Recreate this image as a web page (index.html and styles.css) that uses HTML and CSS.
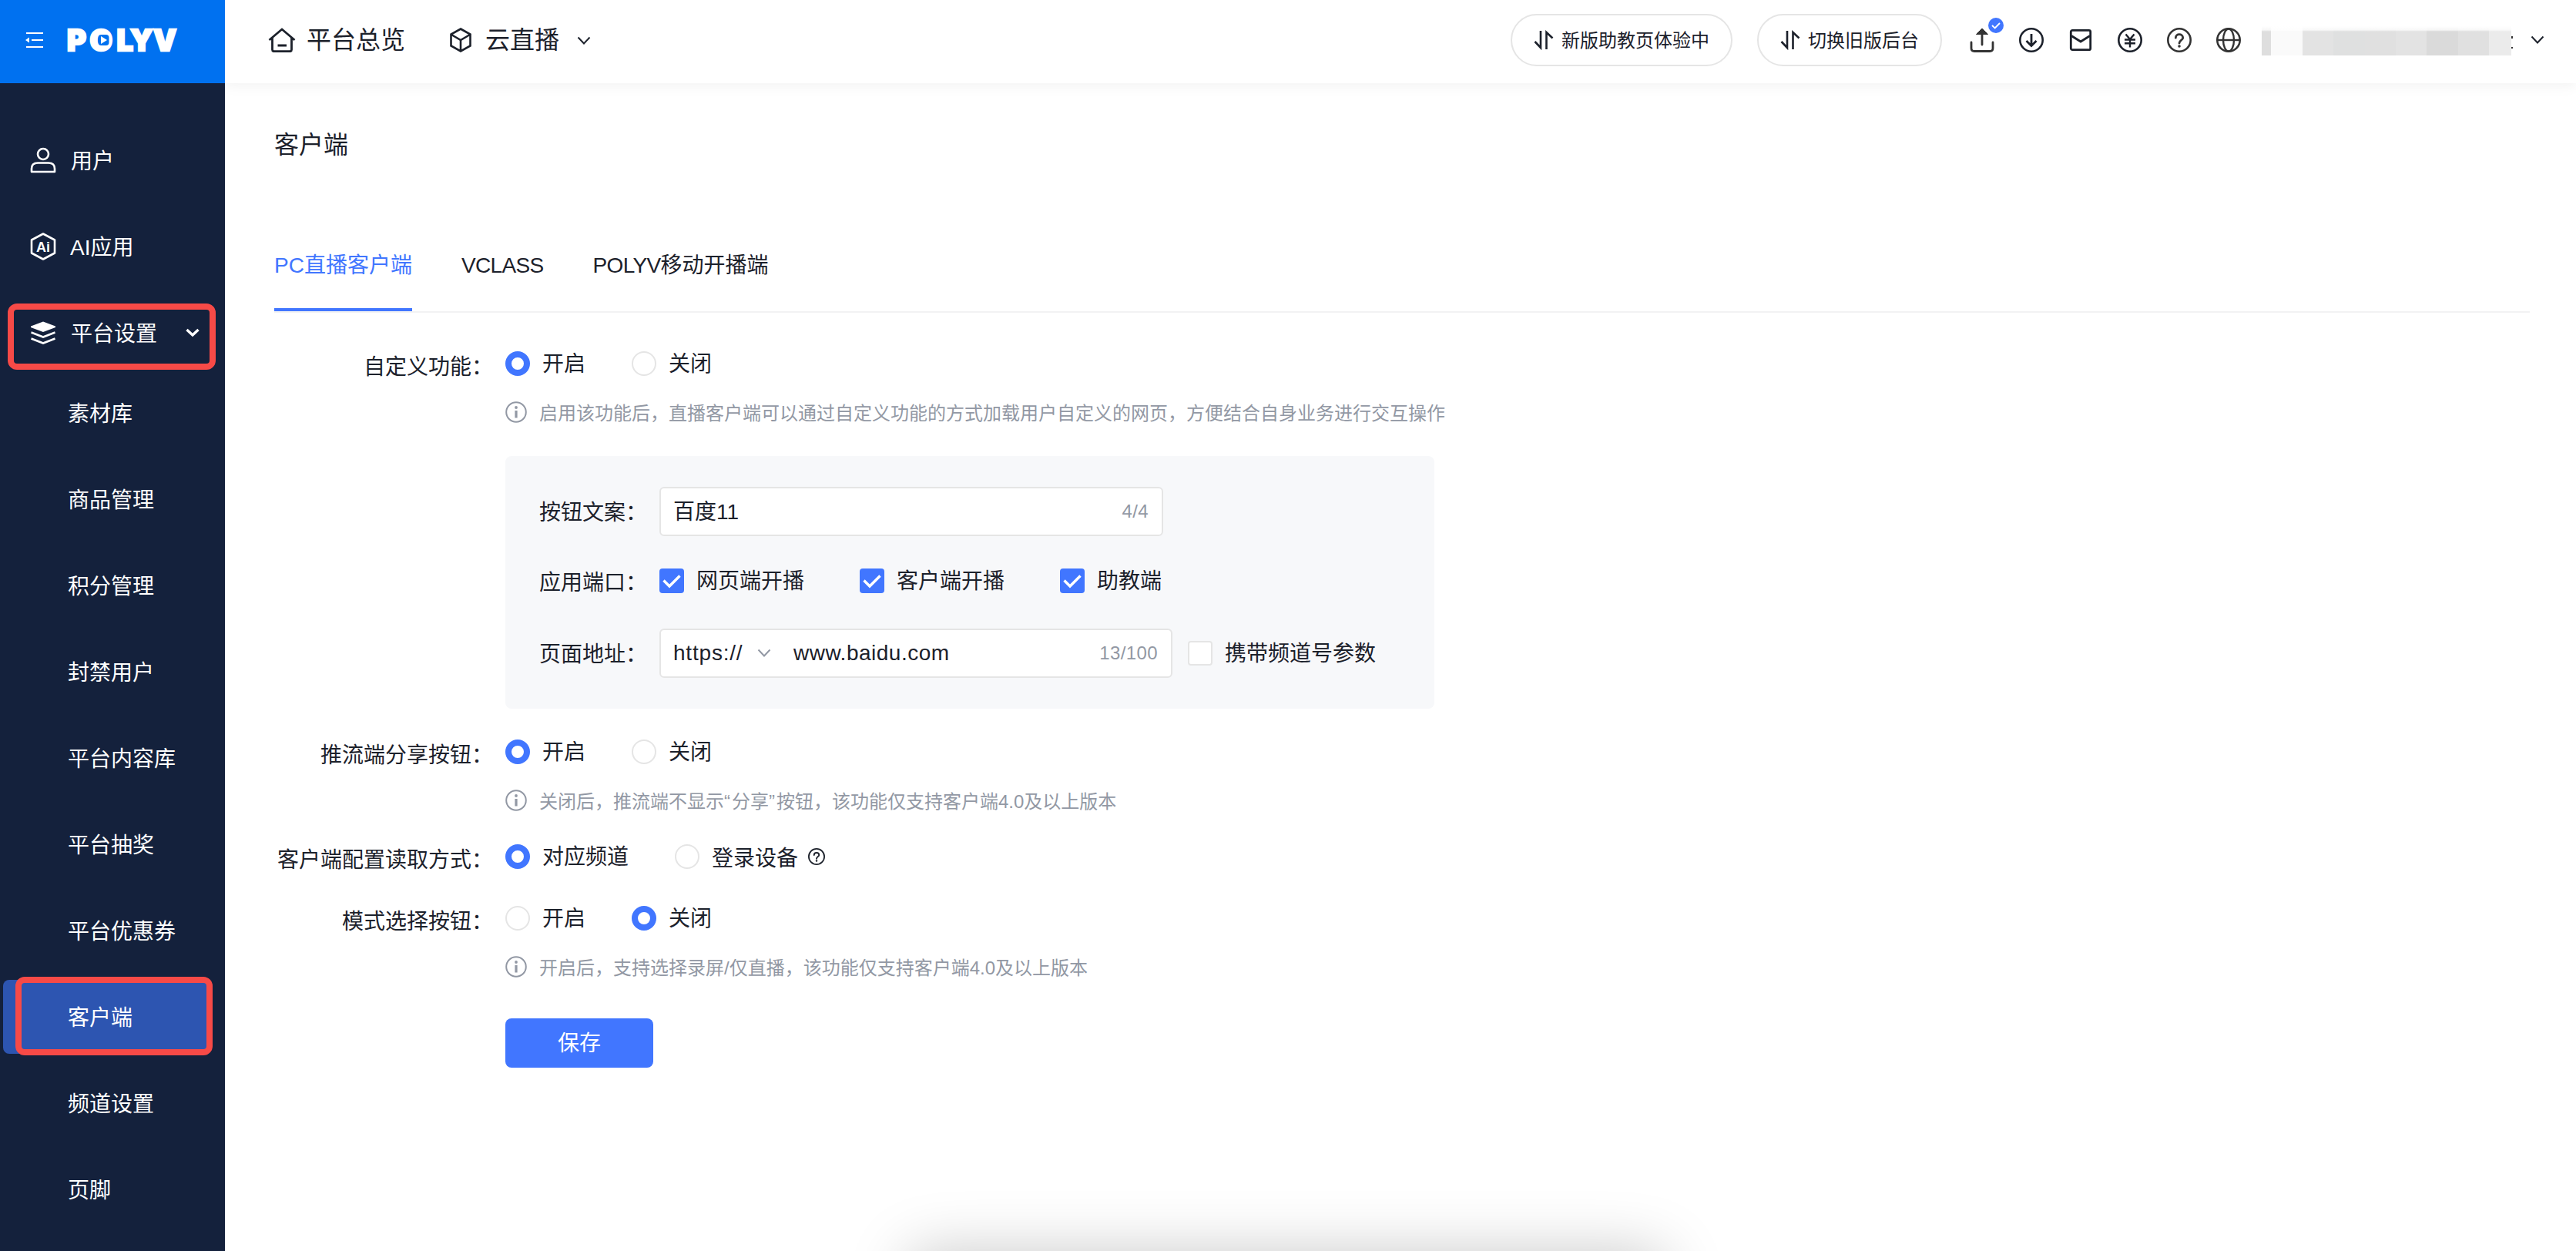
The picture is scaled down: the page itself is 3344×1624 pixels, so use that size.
FILE: index.html
```html
<!DOCTYPE html>
<html lang="zh-CN">
<head>
<meta charset="utf-8">
<title>客户端 - POLYV</title>
<link rel="stylesheet" href="styles.css">
</head>
<body>
<svg class="defs" width="0" height="0">
  <symbol id="info" viewBox="0 0 28 28"><circle cx="14" cy="14" r="12.8" fill="none" stroke="currentColor" stroke-width="2"/><circle cx="14" cy="8" r="1.9" fill="currentColor"/><path d="M14 12v9.500" stroke="currentColor" stroke-width="3.200"/></symbol>
  <symbol id="chevron" viewBox="0 0 18 12"><path d="M1.500 1.500L9 9.500L16.500 1.500" fill="none" stroke="currentColor" stroke-width="2"/></symbol>
  <symbol id="swap" viewBox="0 0 26 26"><path d="M9 1v22L1.500 15M16.500 25V3L24.500 10.500" fill="none" stroke="currentColor" stroke-width="2.600"/></symbol>
  <symbol id="check" viewBox="0 0 32 32"><path d="M5.500 15.500L13 23L26.500 9.500" fill="none" stroke="#fff" stroke-width="3.400"/></symbol>
  <symbol id="question" viewBox="0 0 32 32"><circle cx="16" cy="16" r="14.700" fill="none" stroke="currentColor" stroke-width="2.600"/><path d="M11.300 13.200C11.300 7.200 20.700 7.200 20.700 13.200C20.700 16.200 16 16 16 20" fill="none" stroke="currentColor" stroke-width="2.800" stroke-linecap="round"/><circle cx="16" cy="24" r="1.800" fill="currentColor"/></symbol>
</svg>
<div class="app">
  <aside class="sidebar">
    <div class="brand">
      <svg class="fold" viewBox="0 0 24 22" width="24" height="22"><path d="M1 2H23M8 11H23M1 20H23" stroke="#fff" stroke-width="2.200"/><path d="M0 11L5 7.500V14.500Z" fill="#fff"/></svg>
      <svg class="logo" viewBox="0 0 150 32" width="150" height="32"><text x="-1 28.5 63.500 81 111" y="29.500">POLYV</text><rect x="39.500" y="9" width="14" height="14" rx="4" fill="#0071f0"/><path d="M43 11L51 16L43 21Z" fill="#fff"/></svg>
    </div>
    <nav class="menu">
      <a class="item"><svg viewBox="0 0 36 36" width="36" height="36"><circle cx="18" cy="10" r="7" fill="none" stroke="#fff" stroke-width="2.600"/><path d="M3 33V29C3 24 6 21.500 11 21.500H25C30 21.500 33 24 33 29V33Z" fill="none" stroke="#fff" stroke-width="2.600" stroke-linejoin="round"/></svg><span>用户</span></a>
      <a class="item"><svg viewBox="0 0 36 36" width="36" height="36"><path d="M18 1.500L33 9.500V26.500L18 34.500L3 26.500V9.500Z" fill="none" stroke="#fff" stroke-width="2.600" stroke-linejoin="round"/><text class="ai" x="18" y="25" text-anchor="middle">Ai</text></svg><span class="tight">AI应用</span></a>
      <a class="item open"><svg viewBox="0 0 36 36" width="36" height="36"><path d="M18 3.500L34 9.500V11L18 17L2 11V9.500Z" fill="#fff"/><path d="M2.500 17.500L18 23.500L33.500 17.500M2.500 25.500L18 31.500L33.500 25.500" fill="none" stroke="#fff" stroke-width="2.600"/></svg><span>平台设置</span><svg class="arrow" viewBox="0 0 18 12" width="18" height="12"><path d="M1.500 2L9 9L16.500 2" fill="none" stroke="#fff" stroke-width="3.400"/></svg></a>
      <div class="submenu">
        <a class="sub">素材库</a>
        <a class="sub">商品管理</a>
        <a class="sub">积分管理</a>
        <a class="sub">封禁用户</a>
        <a class="sub">平台内容库</a>
        <a class="sub">平台抽奖</a>
        <a class="sub">平台优惠券</a>
        <a class="sub active">客户端</a>
        <a class="sub">频道设置</a>
        <a class="sub">页脚</a>
      </div>
    </nav>
  </aside>
  <div class="body">
    <header class="topbar">
      <a class="crumb"><svg viewBox="0 0 36 32" width="36" height="32"><path d="M1.500 16L18 2L34.500 16M5.500 13V28.500Q5.500 30.700 7.700 30.700H28.300Q30.500 30.700 30.500 28.500V13M12.500 23H24" fill="none" stroke="currentColor" stroke-width="2.800"/></svg><span>平台总览</span></a>
      <a class="crumb product"><svg viewBox="0 0 28 32" width="28" height="32"><path d="M14 1.500L26.500 8.500V23.500L14 30.500L1.500 23.500V8.500ZM2 9L14 16L26 9M14 16V30" fill="none" stroke="currentColor" stroke-width="2.600"/></svg><span>云直播</span><svg class="caret" width="18" height="12"><use href="#chevron"/></svg></a>
      <div class="tools">
        <a class="pill"><svg width="26" height="26"><use href="#swap"/></svg><span>新版助教页体验中</span></a>
        <a class="pill"><svg width="26" height="26"><use href="#swap"/></svg><span>切换旧版后台</span></a>
        <div class="icons">
          <div class="upload"><svg viewBox="0 0 32 32" width="32" height="32"><path d="M2 19V26.500Q2 30.500 6 30.500H26Q30 30.500 30 26.500V19M16 22V6" fill="none" stroke="#333" stroke-width="2.800" stroke-linecap="round"/><path d="M16 1L23.500 8.500H8.500Z" fill="#333" stroke="#333" stroke-linejoin="round"/></svg><svg class="done" viewBox="0 0 20 20" width="20" height="20"><circle cx="10" cy="10" r="10" fill="#4176ff"/><path d="M5 10L8.700 13.500L15 7" fill="none" stroke="#fff" stroke-width="1.800"/></svg></div>
          <svg viewBox="0 0 32 32" width="32" height="32"><circle cx="16" cy="16" r="14.700" fill="none" stroke="currentColor" stroke-width="2.600"/><path d="M16 8V23M9.500 17L16 23.500L22.500 17" fill="none" stroke="currentColor" stroke-width="2.800"/></svg>
          <svg viewBox="0 0 32 32" width="32" height="32"><rect x="3.300" y="3.300" width="25.400" height="25.400" rx="2" fill="none" stroke="currentColor" stroke-width="2.800"/><path d="M4 10.500L16 18L28 10.500" fill="none" stroke="currentColor" stroke-width="2.800"/></svg>
          <svg viewBox="0 0 32 32" width="32" height="32"><circle cx="16" cy="16" r="14.700" fill="none" stroke="currentColor" stroke-width="2.600"/><path d="M10.500 8.500L16 15L21.500 8.500M9 15.500H23M9 20.300H23M16 15V25.500" fill="none" stroke="currentColor" stroke-width="2.400"/></svg>
          <svg class="soft" width="32" height="32"><use href="#question"/></svg>
          <svg class="soft" viewBox="0 0 32 32" width="32" height="32"><circle cx="16" cy="16" r="14.700" fill="none" stroke="currentColor" stroke-width="2.600"/><ellipse cx="16" cy="16" rx="7" ry="14.500" fill="none" stroke="currentColor" stroke-width="2.400"/><path d="M1.500 16H30.500" stroke="currentColor" stroke-width="2.400"/></svg>
        </div>
        <div class="account"><div class="mask"></div><i class="tail"></i><svg width="18" height="12"><use href="#chevron"/></svg></div>
      </div>
    </header>
    <main class="content">
      <h1>客户端</h1>
      <div class="tabs"><a class="tab current">PC直播客户端</a><a class="tab"><span class="latin">VCLASS</span></a><a class="tab"><span class="latin">POLYV</span>移动开播端</a></div>
      <section class="form">
        <div class="row">
          <div class="label">自定义功能：</div>
          <div class="field">
            <div class="options"><label class="option"><i class="radio on"></i><span>开启</span></label><label class="option"><i class="radio"></i><span>关闭</span></label></div>
            <div class="hint"><svg width="28" height="28"><use href="#info"/></svg><span>启用该功能后，直播客户端可以通过自定义功能的方式加载用户自定义的网页，方便结合自身业务进行交互操作</span></div>
            <div class="panel">
              <div class="line"><div class="name">按钮文案：</div><div class="input text"><span>百度11</span><em>4/4</em></div></div>
              <div class="line ports"><div class="name">应用端口：</div><div class="checks"><label class="option"><svg class="box on" width="32" height="32"><use href="#check"/></svg><span>网页端开播</span></label><label class="option"><svg class="box on" width="32" height="32"><use href="#check"/></svg><span>客户端开播</span></label><label class="option"><svg class="box on" width="32" height="32"><use href="#check"/></svg><span>助教端</span></label></div></div>
              <div class="line"><div class="name">页面地址：</div><div class="input url"><span class="scheme">https://</span><svg width="18" height="12"><use href="#chevron"/></svg><span class="host">www.baidu.com</span><em>13/100</em></div><label class="option carry"><i class="box"></i><span>携带频道号参数</span></label></div>
            </div>
          </div>
        </div>
        <div class="row share">
          <div class="label">推流端分享按钮：</div>
          <div class="field">
            <div class="options"><label class="option"><i class="radio on"></i><span>开启</span></label><label class="option"><i class="radio"></i><span>关闭</span></label></div>
            <div class="hint"><svg width="28" height="28"><use href="#info"/></svg><span>关闭后，推流端不显示<b>“</b>分享<b>”</b>按钮，该功能仅支持客户端4.0及以上版本</span></div>
          </div>
        </div>
        <div class="row config">
          <div class="label">客户端配置读取方式：</div>
          <div class="field">
            <div class="options"><label class="option"><i class="radio on"></i><span>对应频道</span></label><label class="option device"><i class="radio"></i><span>登录设备</span><svg width="22" height="22"><use href="#question"/></svg></label></div>
          </div>
        </div>
        <div class="row mode">
          <div class="label">模式选择按钮：</div>
          <div class="field">
            <div class="options"><label class="option"><i class="radio"></i><span>开启</span></label><label class="option"><i class="radio on"></i><span>关闭</span></label></div>
            <div class="hint"><svg width="28" height="28"><use href="#info"/></svg><span>开启后，支持选择录屏/仅直播，该功能仅支持客户端4.0及以上版本</span></div>
            <button class="save">保存</button>
          </div>
        </div>
      </section>
    </main>
  </div>
</div>
<div class="frame frame-parent"></div>
<div class="frame frame-child"></div>
<div class="floating"></div>
</body>
</html>
```
FILE: styles.css
```css
* { box-sizing: border-box; }
html, body { margin: 0; height: 100%; overflow: hidden; }
body {
  position: relative;
  background: #fff;
  color: #1c212b;
  font: 28px/32px "Liberation Sans", "Noto Sans CJK SC", sans-serif;
  white-space: nowrap;
}
svg { display: block; flex: none; }
i, em { font-style: normal; }
.defs { position: absolute; }
.app { display: flex; height: 1624px; overflow: hidden; }

/* sidebar */
.sidebar { position: relative; z-index: 2; flex: none; width: 292px; background: #14213c; color: #fff; }
.brand { display: flex; align-items: flex-start; gap: 31px; height: 108px; padding: 36px 0 0 33px; background: #0071f0; }
.fold { margin-top: 5px; }
.logo { overflow: visible; }
.logo text { font: 900 38px Inter, sans-serif; fill: #fff; stroke: #fff; stroke-width: 2.4px; }
.menu { padding-top: 44px; }
.item { display: flex; align-items: center; height: 112px; padding-left: 38px; }
.item span { margin-left: 18px; padding-top: 3px; }
.item .tight { margin-left: 17px; }
.item .arrow { margin-left: 37px; }
.ai { font: 700 18px "Liberation Sans", sans-serif; fill: #fff; }
.submenu { display: flex; flex-direction: column; gap: 16px; }
.sub { height: 96px; margin: 0 20px 0 4px; padding: 2px 0 0 84px; line-height: 96px; border-radius: 8px; }
.sub.active { background: #2d55b1; }

/* top bar */
.body { flex: 1; min-width: 0; }
.topbar { display: flex; align-items: center; height: 108px; padding: 0 41px 4px 56px; background: #fff; box-shadow: 0 4px 16px rgba(0, 0, 0, 0.05); }
.crumb { display: flex; align-items: center; font-size: 32px; }
.crumb span { margin-left: 14px; }
.crumb.product { margin-left: 58px; }
.crumb.product span { margin-left: 18px; }
.caret { margin-left: 23px; margin-top: 2px; }
.tools { display: flex; align-items: center; margin-left: auto; }
.pill { display: flex; align-items: center; height: 68px; margin-right: 32px; padding: 0 28px; border: 2px solid #e5e5e5; border-radius: 34px; font-size: 24px; }
.pill span { margin-left: 10px; padding-top: 2px; }
.icons { display: flex; gap: 32px; margin-left: 4px; }
.icons .soft { color: #333; }
.upload { position: relative; }
.done { position: absolute; left: 24px; top: -13px; }
.account { display: flex; align-items: center; margin-left: 27px; }
.mask {
  width: 324px; height: 38px; margin-top: 2px;
  background:
    linear-gradient(#fff, rgba(255, 255, 255, 0.75) 5px, transparent 7px),
    linear-gradient(90deg, #dedede 12px, #fafafa 12px 53px, #e3e3e3 53px 93px, #dfe0e0 93px 134px, #e0e0e0 134px 174px, #e3e3e3 174px 214px, #dadada 214px 255px, #e0e0e0 255px 295px, #ebebeb 295px);
}
.tail { width: 2px; height: 16px; margin: 6px 23px 0 0; border-top: 3px solid #333; border-bottom: 2px solid #333; }

/* page */
.content { padding: 63px 60px 0 64px; }
h1 { margin: 0; font-size: 32px; line-height: 34px; font-weight: 400; }
.tabs { display: flex; gap: 64px; height: 108px; margin-top: 93px; border-bottom: 2px solid #f2f2f3; }
.tab { height: 106px; padding-top: 31px; }
.tab.current { border-bottom: 4px solid #4176ff; color: #4176ff; }
.latin { letter-spacing: -0.65px; }

/* form */
.form { padding-top: 50px; }
.row { display: grid; grid-template-columns: 284px 1206px; column-gap: 16px; }
.label { padding-top: 5px; text-align: right; }
.options, .checks { display: flex; gap: 60px; }
.option { display: flex; align-items: center; height: 32px; }
.option span { margin-left: 16px; padding-top: 2px; }
.radio { width: 32px; height: 32px; border: 2px solid #e5e5e5; border-radius: 50%; background: #fff; }
.radio.on { border: 8px solid #4176ff; }
.hint { display: flex; align-items: center; height: 28px; margin-top: 33px; color: #9298a4; font-size: 24px; }
.hint span { margin-left: 16px; padding-top: 3px; }
.hint b { font-weight: 400; letter-spacing: 2px; }
.panel { height: 328px; margin-top: 43px; padding: 40px 44px; border-radius: 8px; background: #f7f8fa; }
.line { display: flex; align-items: center; height: 64px; }
.name { width: 156px; padding-top: 3px; }
.ports { height: 32px; margin: 42px 0 46px; }
.ports .name { padding-top: 5px; }
.checks { gap: 72px; }
.input { display: flex; align-items: center; height: 64px; padding: 0 17px 0 16px; border: 2px solid #e5e5e5; border-radius: 6px; background: #fff; }
.input em { margin-left: auto; color: #9298a4; font-size: 24px; letter-spacing: 0.4px; }
.input svg { margin-left: 18px; color: #9298a4; }
.text { width: 654px; }
.text span { padding-top: 2px; }
.url { width: 666px; }
.scheme { width: 91px; letter-spacing: 0.8px; }
.host { margin-left: 29px; letter-spacing: 0.5px; }
.box { flex: none; width: 32px; height: 32px; border: 2px solid #e5e5e5; border-radius: 4px; background: #fff; }
.box.on { border: 0; background: #4176ff; }
.carry { margin-left: 20px; }
.share { margin-top: 40px; }
.config { margin-top: 43px; }
.mode { margin-top: 43px; }
.device span { padding-top: 5px; }
.device svg { margin-left: 13px; }
.save { display: block; width: 192px; height: 64px; margin-top: 53px; padding: 2px 0 0; border: 0; border-radius: 8px; background: #4176ff; color: #fff; font: inherit; }

/* overlays */
.frame { position: absolute; z-index: 3; border: 8px solid #f74a47; border-radius: 12px; }
.frame-parent { left: 10px; top: 394px; width: 270px; height: 86px; }
.frame-child { left: 20px; top: 1268px; width: 256px; height: 102px; }

/* shadow cast upwards by the bar docked under the viewport */
.floating { position: absolute; left: 1060px; bottom: 0; width: 1220px; height: 100px; overflow: clip; }
.floating::before { content: ""; display: block; width: 980px; height: 120px; margin: 102px 0 0 120px; border-radius: 16px; box-shadow: 0 0 80px rgba(0, 0, 0, 0.22); }
```
